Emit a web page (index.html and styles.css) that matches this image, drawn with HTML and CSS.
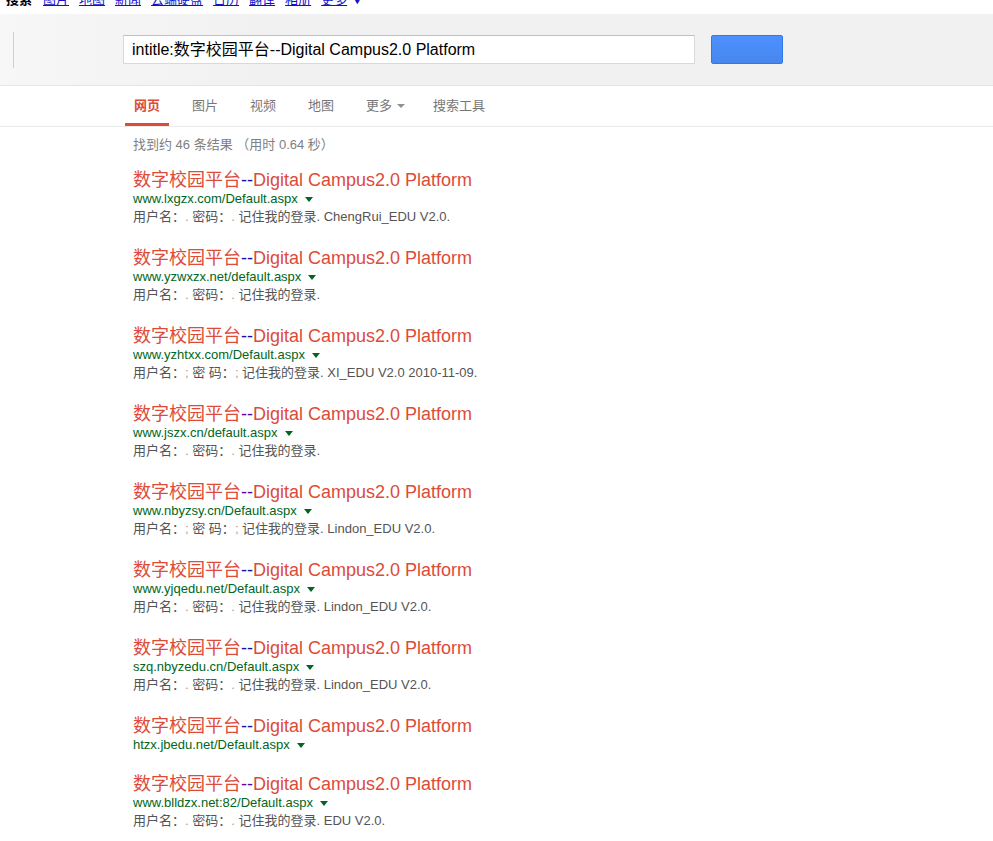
FILE: index.html
```html
<!DOCTYPE html>
<html lang="zh-CN">
<head>
<meta charset="utf-8">
<title>intitle:数字校园平台--Digital Campus2.0 Platform</title>
<link rel="stylesheet" href="styles.css">
</head>
<body>
<div class="topbar">
  <div class="topbar-inner">
    <b class="tb-cur">搜索</b>
    <a class="tb-link" href="#">图片</a>
    <a class="tb-link" href="#">地图</a>
    <a class="tb-link" href="#">新闻</a>
    <a class="tb-link" href="#">云端硬盘</a>
    <a class="tb-link" href="#">日历</a>
    <a class="tb-link" href="#">翻译</a>
    <a class="tb-link" href="#">相册</a>
    <a class="tb-link" href="#">更多</a><span class="tb-arrow">▼</span>
  </div>
</div>

<div class="header">
  <div class="logo-sep"></div>
  <div class="searchbox">intitle:数字校园平台--Digital Campus2.0 Platform</div>
  <div class="searchbtn"></div>
</div>

<div class="nav">
  <div class="tab active">网页</div>
  <div class="tab">图片</div>
  <div class="tab">视频</div>
  <div class="tab">地图</div>
  <div class="tab">更多<span class="tab-arrow"></span></div>
  <div class="tab tools">搜索工具</div>
</div>

<div class="results">
  <div class="stats">找到约 46 条结果 （用时 0.64 秒）</div>

  <div class="result">
    <div class="title">数字校园平台<span class="dash">--</span>Digital Campus2.0 Platform</div>
    <div class="url">www.lxgzx.com/Default.aspx<span class="url-arrow"></span></div>
    <div class="snippet">用户名：<span class="em">.</span> 密码：<span class="em">.</span> 记住我的登录. ChengRui_EDU V2.0.</div>
  </div>

  <div class="result">
    <div class="title">数字校园平台<span class="dash">--</span>Digital Campus2.0 Platform</div>
    <div class="url">www.yzwxzx.net/default.aspx<span class="url-arrow"></span></div>
    <div class="snippet">用户名：<span class="em">.</span> 密码：<span class="em">.</span> 记住我的登录.</div>
  </div>

  <div class="result">
    <div class="title">数字校园平台<span class="dash">--</span>Digital Campus2.0 Platform</div>
    <div class="url">www.yzhtxx.com/Default.aspx<span class="url-arrow"></span></div>
    <div class="snippet">用户名：<span class="em">;</span> 密 码：<span class="em">;</span> 记住我的登录. XI_EDU V2.0 2010-11-09.</div>
  </div>

  <div class="result">
    <div class="title">数字校园平台<span class="dash visited">--</span>Digital Campus2.0 Platform</div>
    <div class="url">www.jszx.cn/default.aspx<span class="url-arrow"></span></div>
    <div class="snippet">用户名：<span class="em">.</span> 密码：<span class="em">.</span> 记住我的登录.</div>
  </div>

  <div class="result">
    <div class="title">数字校园平台<span class="dash visited">--</span>Digital Campus2.0 Platform</div>
    <div class="url">www.nbyzsy.cn/Default.aspx<span class="url-arrow"></span></div>
    <div class="snippet">用户名：<span class="em">;</span> 密 码：<span class="em">;</span> 记住我的登录. Lindon_EDU V2.0.</div>
  </div>

  <div class="result">
    <div class="title">数字校园平台<span class="dash">--</span>Digital Campus2.0 Platform</div>
    <div class="url">www.yjqedu.net/Default.aspx<span class="url-arrow"></span></div>
    <div class="snippet">用户名：<span class="em">.</span> 密码：<span class="em">.</span> 记住我的登录. Lindon_EDU V2.0.</div>
  </div>

  <div class="result">
    <div class="title">数字校园平台<span class="dash">--</span>Digital Campus2.0 Platform</div>
    <div class="url">szq.nbyzedu.cn/Default.aspx<span class="url-arrow"></span></div>
    <div class="snippet">用户名：<span class="em">.</span> 密码：<span class="em">.</span> 记住我的登录. Lindon_EDU V2.0.</div>
  </div>

  <div class="result">
    <div class="title">数字校园平台<span class="dash">--</span>Digital Campus2.0 Platform</div>
    <div class="url">htzx.jbedu.net/Default.aspx<span class="url-arrow"></span></div>
  </div>

  <div class="result">
    <div class="title">数字校园平台<span class="dash visited">--</span>Digital Campus2.0 Platform</div>
    <div class="url">www.blldzx.net:82/Default.aspx<span class="url-arrow"></span></div>
    <div class="snippet">用户名：<span class="em">.</span> 密码：<span class="em">.</span> 记住我的登录. EDU V2.0.</div>
  </div>
</div>
</body>
</html>
```

FILE: styles.css
```css
html, body {
  margin: 0;
  padding: 0;
  background: #fff;
  font-family: "Liberation Sans", Arial, "Noto Sans CJK SC", sans-serif;
  font-size: 13px;
  color: #222;
}

.topbar {
  height: 14px;
  overflow: hidden;
  background: #fff;
}
.topbar-inner {
  display: flex;
  align-items: baseline;
  padding-left: 6px;
  margin-top: -9px;
  line-height: 16px;
  font-size: 13px;
  font-family: "Noto Sans CJK SC", sans-serif;
}
.tb-cur {
  color: #000;
  font-weight: bold;
  margin-right: 11px;
}
.tb-link {
  color: #1111cc;
  text-decoration: underline;
  margin-right: 10px;
}
.tb-arrow {
  color: #1111cc;
  font-size: 10px;
  margin-left: -5px;
}

.header {
  height: 71px;
  background: linear-gradient(90deg, #f7f7f7 0, #f1f1f1 260px, #f1f1f1 100%);
  border-bottom: 1px solid #e5e5e5;
  display: flex;
  align-items: center;
}
.logo-sep {
  width: 1px;
  height: 36px;
  margin-left: 13px;
  background: #cfcfcf;
}
.searchbox {
  margin-left: 109px;
  width: 562px;
  height: 27px;
  padding-left: 8px;
  background: #fff;
  border: 1px solid #d9d9d9;
  border-top-color: #c0c0c0;
  font-size: 16px;
  line-height: 27px;
  color: #000;
  font-family: "Liberation Sans", Arial, "Noto Sans CJK SC", sans-serif;
}
.searchbtn {
  margin-left: 16px;
  width: 70px;
  height: 27px;
  background: linear-gradient(#4d90fe, #4787ed);
  border: 1px solid #3079ed;
  border-radius: 2px;
}

.nav {
  height: 40px;
  border-bottom: 1px solid #ebebeb;
  display: flex;
  padding-left: 125px;
  font-family: "Noto Sans CJK SC", sans-serif;
}
.tab {
  padding: 0 9px;
  margin-right: 14px;
  height: 40px;
  line-height: 38px;
  color: #777;
  font-size: 13px;
  box-sizing: border-box;
}
.tab.active {
  color: #dd4b39;
  font-weight: bold;
  border-bottom: 3px solid #dd4b39;
}
.tab-arrow {
  display: inline-block;
  width: 0;
  height: 0;
  border-left: 4px solid transparent;
  border-right: 4px solid transparent;
  border-top: 4px solid #909090;
  margin-left: 5px;
  vertical-align: middle;
}
.tab.tools {
  margin-left: -4px;
}

.results {
  padding-left: 133px;
}
.stats {
  color: #808080;
  font-size: 13px;
  line-height: 16px;
  margin-top: 10px;
  margin-bottom: 17px;
  font-family: "Liberation Sans", Arial, "Noto Sans CJK SC", sans-serif;
}
.result {
  margin-bottom: 21px;
}
.title {
  font-size: 18px;
  line-height: 20px;
  color: #dd4b39;
  white-space: nowrap;
}
.dash {
  color: #1a0dab;
}
.dash.visited {
  color: #660099;
}
.url {
  color: #006621;
  font-size: 13px;
  line-height: 17px;
}
.url-arrow {
  display: inline-block;
  width: 0;
  height: 0;
  border-left: 4px solid transparent;
  border-right: 4px solid transparent;
  border-top: 5px solid #006621;
  margin-left: 7px;
  vertical-align: middle;
}
.snippet {
  color: #545454;
  font-size: 13px;
  line-height: 20px;
}
.em {
  color: #a0a0a0;
}
```
